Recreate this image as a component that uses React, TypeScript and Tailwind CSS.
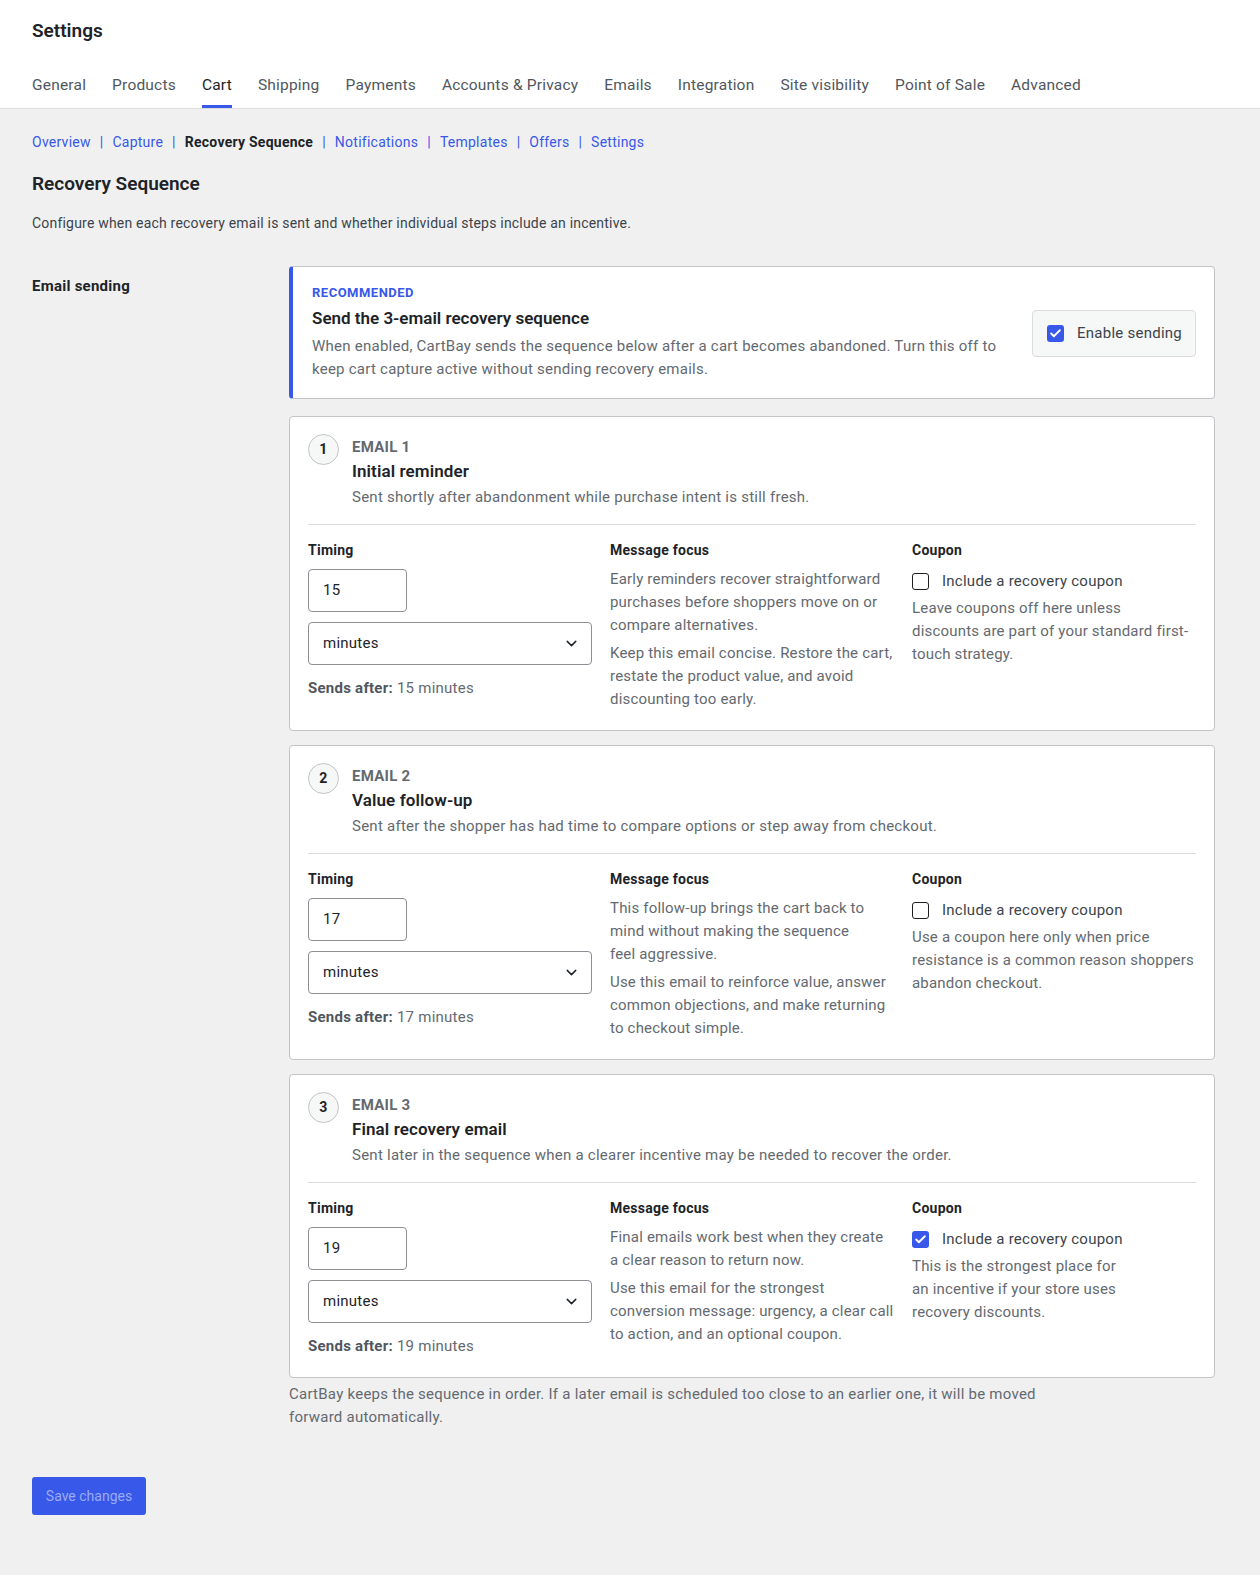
import React from "react"
import { Check, ChevronDown } from "lucide-react"

type Step = {
  num: number
  title: string
  summary: string
  delay: number
  focus: string[]
  coupon: boolean
  couponNote: string
}

const steps: Step[] = [
  {
    num: 1,
    title: "Initial reminder",
    summary: "Sent shortly after abandonment while purchase intent is still fresh.",
    delay: 15,
    focus: [
      "Early reminders recover straightforward purchases before shoppers move on or compare alternatives.",
      "Keep this email concise. Restore the cart, restate the product value, and avoid discounting too early.",
    ],
    coupon: false,
    couponNote:
      "Leave coupons off here unless discounts are part of your standard first-touch strategy.",
  },
  {
    num: 2,
    title: "Value follow-up",
    summary: "Sent after the shopper has had time to compare options or step away from checkout.",
    delay: 17,
    focus: [
      "This follow-up brings the cart back to mind without making the sequence feel aggressive.",
      "Use this email to reinforce value, answer common objections, and make returning to checkout simple.",
    ],
    coupon: false,
    couponNote:
      "Use a coupon here only when price resistance is a common reason shoppers abandon checkout.",
  },
  {
    num: 3,
    title: "Final recovery email",
    summary: "Sent later in the sequence when a clearer incentive may be needed to recover the order.",
    delay: 19,
    focus: [
      "Final emails work best when they create a clear reason to return now.",
      "Use this email for the strongest conversion message: urgency, a clear call to action, and an optional coupon.",
    ],
    coupon: true,
    couponNote: "This is the strongest place for an incentive if your store uses recovery discounts.",
  },
]

const tabs = [
  "General",
  "Products",
  "Cart",
  "Shipping",
  "Payments",
  "Accounts & Privacy",
  "Emails",
  "Integration",
  "Site visibility",
  "Point of Sale",
  "Advanced",
]

const subnav = ["Overview", "Capture", "Recovery Sequence", "Notifications", "Templates", "Offers", "Settings"]

const Checkbox = ({ checked }: { checked: boolean }) =>
  checked ? (
    <span className="flex h-[17px] w-[17px] shrink-0 items-center justify-center rounded-[3px] bg-[#3858e9]">
      <Check size={13} strokeWidth={3.5} color="#ffffff" />
    </span>
  ) : (
    <span className="h-[17px] w-[17px] shrink-0 rounded-[3px] border border-[#1e1e1e] bg-white" />
  )

const StepCard = ({ step }: { step: Step }) => (
  <div className="rounded-[4px] border border-[#c3c4c7] bg-white px-[18px] pt-[18px] pb-[19px]">
    {/* en-tête de l'étape */}
    <div className="flex gap-[13px]">
      <div className="mt-[-1px] flex h-[31px] w-[31px] shrink-0 items-center justify-center rounded-full border border-[#c3c4c7] bg-[#f6f7f7] text-[14px] font-bold text-[#1d2327]">
        {step.num}
      </div>
      <div>
        <div className="text-[15px] leading-[24px] font-bold uppercase text-[#646970]">Email {step.num}</div>
        <div className="text-[17px] leading-[24px] font-semibold tracking-[0.1px] text-[#1d2327]">{step.title}</div>
        <div className="mt-[2px] text-[15px] leading-[24px] text-[#646970]">{step.summary}</div>
      </div>
    </div>

    <div className="mt-[15px] border-t border-[#dcdcde]" />

    <div className="mt-[15px] grid grid-cols-3 gap-[18px]">
      {/* Timing */}
      <div>
        <div className="text-[14px] leading-[20px] font-bold text-[#1d2327]">Timing</div>
        <div className="mt-[9px] flex h-[43px] w-[99px] items-center rounded-[4px] border border-[#8c8f94] px-[14px] text-[15px] text-[#1d2327]">
          {step.delay}
        </div>
        <div className="mt-[10px] flex h-[43px] items-center justify-between rounded-[4px] border border-[#8c8f94] pr-[11px] pl-[14px] text-[15px] text-[#1d2327]">
          <span>minutes</span>
          <ChevronDown size={17} strokeWidth={2} color="#1d2327" />
        </div>
        <div className="mt-[11px] text-[15px] leading-[24px] text-[#646970]">
          <span className="font-bold text-[#50575e]">Sends after:</span> {step.delay} minutes
        </div>
      </div>

      {/* Message focus */}
      <div>
        <div className="text-[14px] leading-[20px] font-bold text-[#1d2327]">Message focus</div>
        {step.focus.map((p, i) => (
          <p
            key={i}
            className={`${i === 0 ? "mt-[8px]" : "mt-[5px]"} text-[15px] leading-[23px] tracking-[0.19px] text-pretty text-[#646970]`}
          >
            {p}
          </p>
        ))}
      </div>

      {/* Coupon */}
      <div>
        <div className="text-[14px] leading-[20px] font-bold text-[#1d2327]">Coupon</div>
        <label className="mt-[9px] flex h-[24px] items-center gap-[13px] text-[15px] text-[#3c434a]">
          <Checkbox checked={step.coupon} />
          Include a recovery coupon
        </label>
        <p className="mt-[4px] text-[15px] leading-[23px] tracking-[0.19px] text-pretty text-[#646970]">
          {step.couponNote}
        </p>
      </div>
    </div>
  </div>
)

export default function App() {
  return (
    <div className="min-h-screen bg-[#f0f0f1] pb-[61px] font-['Roboto',sans-serif] tracking-[0.25px] text-[#1d2327]">
      {/* Barre d'en-tête */}
      <div className="border-b border-[#dcdcde] bg-white px-[32px] pt-[19px]">
        <h1 className="text-[19px] leading-[24px] font-semibold tracking-normal text-[#1d2327]">Settings</h1>
        <nav className="mt-[32px] flex gap-[26px]">
          {tabs.map((t) => (
            <a
              key={t}
              className={`border-b-[3px] pb-[10px] text-[15.5px] leading-[20px] tracking-[0.2px] ${
                t === "Cart" ? "border-[#3858e9] text-[#1d2327]" : "border-transparent text-[#50575e]"
              }`}
            >
              {t}
            </a>
          ))}
        </nav>
      </div>

      <div className="px-[32px]">
        {/* Sous-navigation */}
        <div className="mt-[23px] flex text-[14px] leading-[20px]">
          {subnav.map((s, i) => (
            <span key={s} className="flex">
              {i > 0 && <span className="mx-[9px] text-[#3858e9]">|</span>}
              <span className={s === "Recovery Sequence" ? "font-bold text-[#1d2327]" : "text-[#3858e9]"}>{s}</span>
            </span>
          ))}
        </div>

        <h2 className="mt-[20px] text-[19px] leading-[24px] font-semibold tracking-normal text-[#1d2327]">
          Recovery Sequence
        </h2>
        <p className="mt-[17px] text-[14px] leading-[20px] tracking-[0.2px] text-[#3c434a]">
          Configure when each recovery email is sent and whether individual steps include an incentive.
        </p>

        <div className="mt-[33px] flex">
          <div className="w-[257px] shrink-0 pt-[10px] text-[15px] leading-[20px] font-bold text-[#1d2327]">
            Email sending
          </div>

          <div className="w-[926px]">
            {/* Carte recommandée */}
            <div className="mb-[17px] flex items-center gap-[24px] rounded-[4px] border border-l-4 border-[#c3c4c7] border-l-[#3858e9] bg-white pt-[18px] pr-[18px] pb-[17px] pl-[19px]">
              <div className="flex-1">
                <div className="text-[13px] leading-[16px] font-bold tracking-[0.5px] text-[#3858e9]">RECOMMENDED</div>
                <div className="mt-[5px] text-[17px] leading-[24px] font-semibold tracking-normal text-[#1d2327]">
                  Send the 3-email recovery sequence
                </div>
                <p className="mt-[5px] text-[15px] leading-[23px] text-[#646970]">
                  When enabled, CartBay sends the sequence below after a cart becomes abandoned. Turn this off to keep
                  cart capture active without sending recovery emails.
                </p>
              </div>
              <label className="flex h-[47px] items-center gap-[13px] rounded-[4px] border border-[#dcdcde] bg-[#f6f7f7] pr-[13px] pl-[14px] text-[15px] text-[#3c434a]">
                <Checkbox checked />
                Enable sending
              </label>
            </div>

            <div className="flex flex-col gap-[14px]">
              {steps.map((s) => (
                <StepCard key={s.num} step={s} />
              ))}
            </div>

            <p className="mt-[5px] max-w-[760px] text-[15px] leading-[23px] text-[#646970]">
              CartBay keeps the sequence in order. If a later email is scheduled too close to an earlier one, it will be
              moved forward automatically.
            </p>
          </div>
        </div>

        <button className="mt-[48px] h-[38px] w-[114px] rounded-[3px] bg-[#3858e9] text-[14px] tracking-normal text-[#9aaaf4]">
          Save changes
        </button>
      </div>
    </div>
  )
}
